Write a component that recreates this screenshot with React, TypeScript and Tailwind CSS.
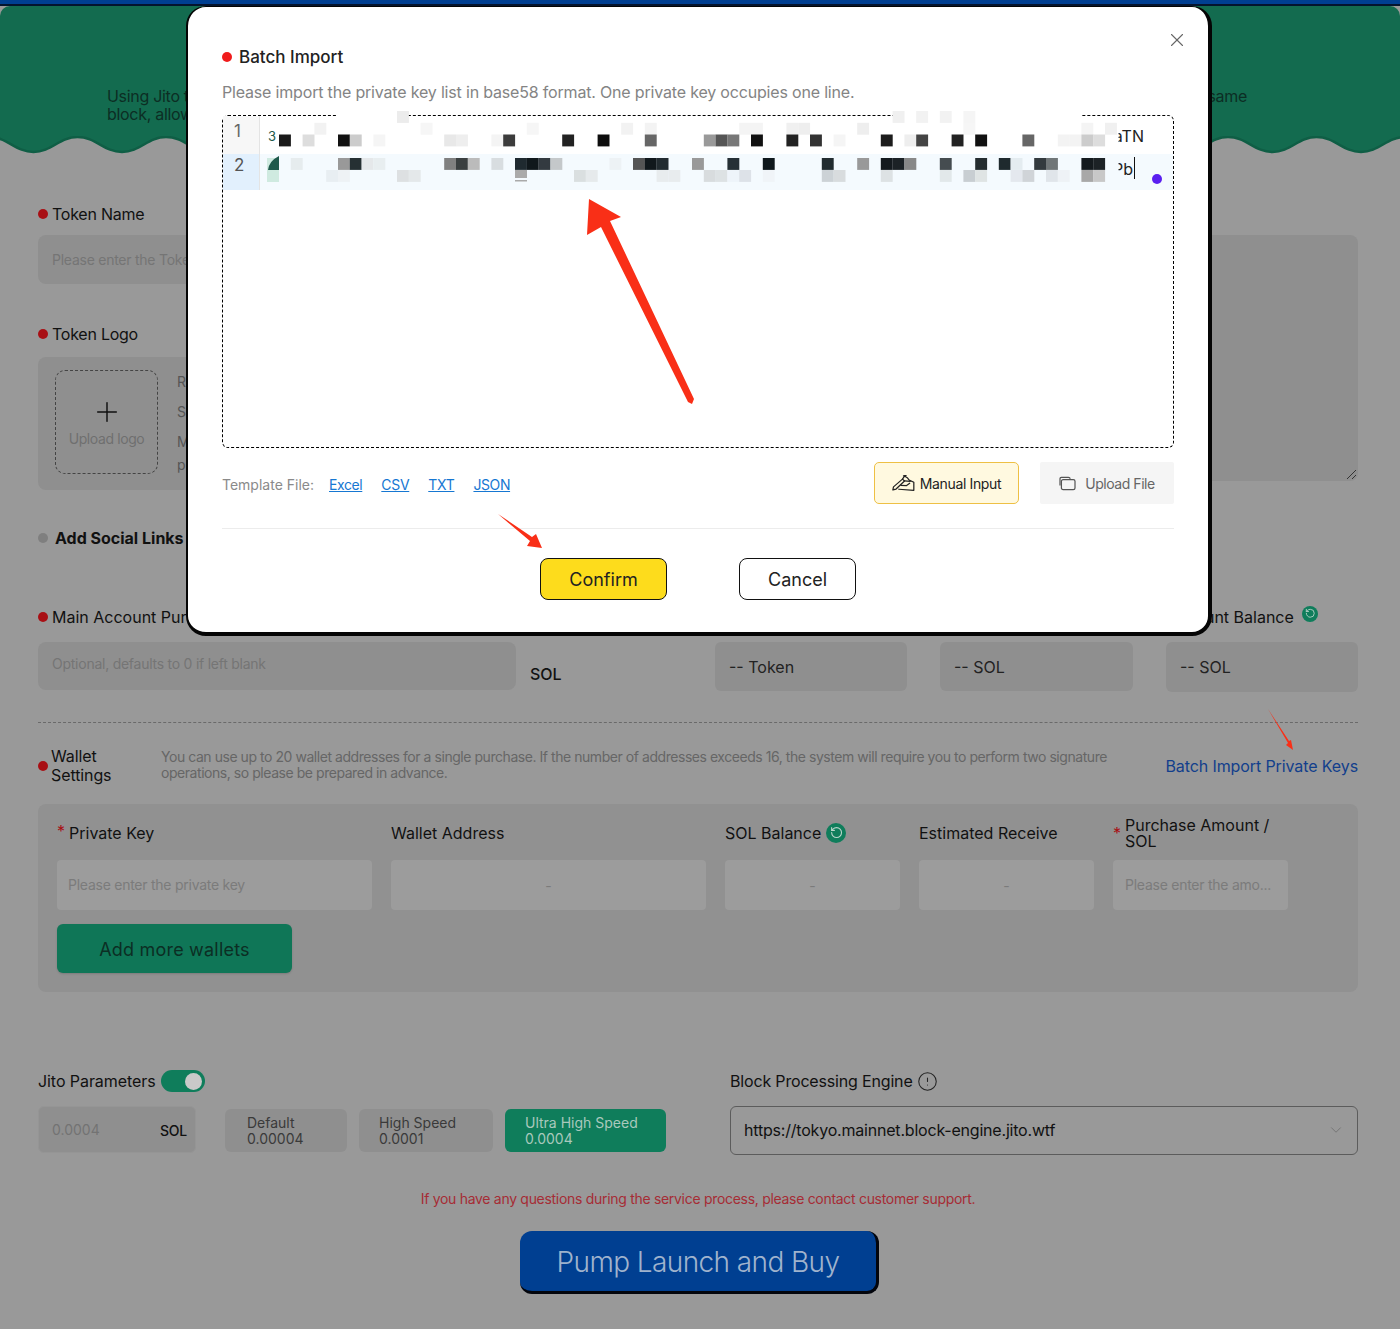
import { ChevronDown, CircleAlert, Plus, RotateCcw, X } from "lucide-react";

type Cell = [number, string];

// mosaic that hides the private keys, index = cell number from x=279
const row0: Cell[] = [[10, "#ececec"], [52, "#f0f0f0"], [54, "#f2f2f2"], [56, "#f2f2f2"], [58, "#f5f5f5"]];
const row1: Cell[] = [[3, "#f2f2f2"], [12, "#f6f6f6"], [21, "#f6f6f6"], [29, "#f2f2f2"], [31, "#f3f3f3"], [39, "#f4f4f4"], [40, "#f4f4f4"], [43, "#f0f0f0"], [44, "#eeeeee"], [49, "#eeeeee"], [58, "#f6f6f6"], [68, "#f4f4f4"], [70, "#f0f0f0"]];
const rowA: Cell[] = [[0, "#1a1a1a"], [2, "#dddddd"], [5, "#111111"], [6, "#cccccc"], [8, "#f5f5f5"], [14, "#e8e8e8"], [15, "#eeeeee"], [18, "#f4f4f4"], [19, "#3c3c3c"], [24, "#222222"], [27, "#0d0d0d"], [31, "#666666"], [36, "#999999"], [37, "#555555"], [38, "#777777"], [40, "#111111"], [43, "#222222"], [45, "#333333"], [47, "#f5f5f5"], [51, "#1c1c1c"], [53, "#eeeeee"], [54, "#444444"], [57, "#222222"], [59, "#111111"], [63, "#666666"], [66, "#f3f3f3"], [67, "#f3f3f3"], [68, "#cccccc"], [69, "#dddddd"]];
const rowB: Cell[] = [[1, "#e6ecee"], [5, "#999999"], [6, "#263033"], [7, "#e5e8ea"], [8, "#e8eef0"], [14, "#808080"], [15, "#3a3f40"], [16, "#bbbbbb"], [18, "#d8dde0"], [20, "#1f2a30"], [21, "#10181c"], [22, "#333a40"], [23, "#c4c8ca"], [28, "#edf2f5"], [30, "#555555"], [31, "#11181c"], [32, "#222b30"], [35, "#999999"], [38, "#263036"], [41, "#0f181c"], [46, "#222c30"], [49, "#999999"], [51, "#141a1e"], [52, "#1c2226"], [53, "#888888"], [56, "#454c50"], [59, "#252d30"], [61, "#1f2a2e"], [62, "#e4ecf0"], [64, "#333a3e"], [65, "#707678"], [68, "#141a1e"], [69, "#1c2226"]];
const rowC: Cell[] = [[4, "#e8eef2"], [5, "#eef2f5"], [10, "#dde0e2"], [11, "#e4e8ea"], [25, "#dadfe0"], [26, "#e6eaec"], [32, "#e8ecee"], [33, "#e8ecee"], [36, "#d8dcde"], [37, "#dde2e4"], [38, "#eef4fa"], [39, "#dde2e8"], [41, "#f0f4f8"], [46, "#ccd2d6"], [47, "#d8dcde"], [51, "#dde2e4"], [56, "#e2e8ea"], [58, "#c8ced2"], [59, "#dfe4e4"], [62, "#e4e8ee"], [63, "#d0d4d8"], [65, "#e0e5ea"], [66, "#eef2f6"], [68, "#a8a8a8"], [69, "#c8c8c8"]];

const mosaicRows: [number, Cell[]][] = [
  [5, row0],
  [16.8, row1],
  [28.5, rowA],
  [52, rowB],
  [64, rowC],
];

// wave under the green header, one bump every 88.5px
function waveEdge() {
  let d = "";
  for (let x = 1405; x > -60; x -= 88.5) {
    d += ` C${x - 18} 1 ${x - 26} 16 ${x - 44} 16 C${x - 62} 16 ${x - 70} 1 ${x - 88.5} 1`;
  }
  return d;
}

function Dot({ className = "bg-[#a80f14]" }: { className?: string }) {
  return <span className={`inline-block w-[10px] h-[10px] rounded-full shrink-0 ${className}`} />;
}

function Label({ children }: { children: React.ReactNode }) {
  return (
    <div className="flex items-center gap-[4px] h-[24px] text-[16px] tracking-[-0.25px] text-[#111]">
      <Dot />
      <span className="whitespace-nowrap">{children}</span>
    </div>
  );
}

function Refresh({ size }: { size: number }) {
  return (
    <span
      className="inline-flex items-center justify-center rounded-full bg-[#0f7d5b] text-[#b9d4ca]"
      style={{ width: size, height: size }}
    >
      <RotateCcw size={size * 0.66} strokeWidth={2} />
    </span>
  );
}

function HandIcon() {
  return (
    <svg width="23" height="16" viewBox="0 0 22 15.5" fill="none" stroke="#222" strokeWidth="1.2" strokeLinejoin="round" strokeLinecap="round">
      <path d="M0.7 14.5 L1.3 11.5 L10 4 L12 5.8 L3.8 13.6 Z" />
      <path d="M10 4 L12 1 L15 3 L16.5 5 L21 7 V14.8 L6.5 13.8" />
      <path d="M12 5.8 L17.5 6.2 M8.5 10 L14 10.2 L17 8" />
      <path d="M11 0.8 L13.5 0.4" />
    </svg>
  );
}

function FolderIcon() {
  return (
    <svg width="17" height="15" viewBox="0 0 18 16" fill="none" stroke="#555" strokeWidth="1.3" strokeLinejoin="round">
      <path d="M1 10 V3 Q1 1.5 2.5 1.5 H10 Q11.5 1.5 12 3" />
      <rect x="2.5" y="3.8" width="14.5" height="10.7" rx="1.8" />
    </svg>
  );
}

function Background() {
  return (
    <div>
      <div className="h-[4px] bg-[#003f91]" />
      <div className="h-[2px] bg-[#04142e]" />
      <div className="h-[130px] bg-[#136b4f] rounded-t-[10px] pt-[81px] pl-[107px] pr-[153px] text-[16px] leading-[18px] tracking-[-0.3px] text-[#0c2e24]">
        <div className="flex justify-between">
          <span>Using Jito technology</span>
          <span>same</span>
        </div>
        <div>block, allowing</div>
      </div>
      <svg className="block" width="1400" height="18" viewBox="0 0 1400 18">
        <path d={`M0 0 H1405 V1${waveEdge()} V0 Z`} fill="#136b4f" />
        <path d={`M1405 1${waveEdge()}`} fill="none" stroke="#0f5e45" strokeWidth="2.5" />
      </svg>

      <div className="pl-[38px] pr-[42px] pt-[48px]">
        <div className="grid grid-cols-[642px_642px] gap-x-[36px]">
          <div>
            <Label>Token Name</Label>
            <div className="mt-[9px] h-[49px] rounded-[8px] bg-[#8f8f8f] px-[14px] flex items-center text-[14px] tracking-[-0.25px] text-[#757575]">
              Please enter the Token Name
            </div>
            <div className="mt-[38px]">
              <Label>Token Logo</Label>
            </div>
            <div className="mt-[11px] h-[133px] rounded-[8px] bg-[#8f8f8f] pl-[17px] pt-[13px] flex gap-[19px]">
              <div className="w-[103px] h-[104px] rounded-[10px] border border-dashed border-[#444] flex flex-col items-center justify-center">
                <Plus size={32} strokeWidth={1.1} className="text-[#111]" />
                <span className="text-[14px] tracking-[-0.4px] text-[#6f6f6f]">Upload logo</span>
              </div>
              <div className="text-[14px] text-[#555] leading-[23px]">
                <p>Recommended</p>
                <p className="mt-[7px]">Size</p>
                <p className="mt-[7px]">Max</p>
                <p>png</p>
              </div>
            </div>
          </div>
          <div>
            <div className="h-[24px]" />
            <div className="relative mt-[9px] h-[246px] rounded-[8px] bg-[#8f8f8f]">
              <svg className="absolute right-[1px] bottom-[1px]" width="11" height="11" viewBox="0 0 11 11" stroke="#333" strokeWidth="1">
                <path d="M1 10 L10 1 M6 10 L10 6" />
              </svg>
            </div>
          </div>
        </div>

        <div className="mt-[36px] flex items-center gap-[7px] h-[24px]">
          <Dot className="bg-[#7f7f7f]" />
          <span className="text-[16px] font-bold text-[#111]">Add Social Links</span>
        </div>

        <div className="mt-[55px] flex">
          <div className="w-[478px]">
            <Label>
              <span className="tracking-normal">Main Account Purchase Amount</span>
            </Label>
            <div className="mt-[13px] h-[48px] rounded-[8px] bg-[#8f8f8f] px-[14px] pb-[6px] flex items-center text-[14px] tracking-[-0.25px] text-[#757575]">
              Optional, defaults to 0 if left blank
            </div>
          </div>
          <div className="ml-[14px] w-[185px] pt-[60px] text-[16px] font-medium leading-[18px] text-[#111]">SOL</div>
          <div className="w-[192px] mt-[37px]">
            <div className="h-[49px] rounded-[6px] bg-[#8f8f8f] px-[14px] flex items-center text-[16px] text-[#222]">-- Token</div>
          </div>
          <div className="ml-[33px] w-[193px] mt-[37px]">
            <div className="h-[49px] rounded-[6px] bg-[#8f8f8f] px-[14px] flex items-center text-[16px] text-[#222]">-- SOL</div>
          </div>
          <div className="ml-[33px] w-[192px]">
            <div className="flex items-start gap-[8px] h-[24px] text-[16px] text-[#111] whitespace-nowrap">
              Account Balance
              <span className="-mt-[4px]">
                <Refresh size={16} />
              </span>
            </div>
            <div className="mt-[13px] h-[50px] rounded-[6px] bg-[#8f8f8f] px-[14px] flex items-center text-[16px] text-[#222]">-- SOL</div>
          </div>
        </div>

        <div className="mt-[30px] border-t border-dashed border-[#6a6a6a]" />

        <div className="mt-[23px] h-[39px] flex items-center">
          <Dot className="bg-[#a80f14] w-[8px]" />
          <div className="ml-[5px] w-[110px] text-[16px] leading-[19px] tracking-[-0.1px] text-[#111] -translate-x-[2px]">
            Wallet
            <br />
            Settings
          </div>
          <p className="-ml-[2px] w-[960px] text-[14px] leading-[16px] tracking-[-0.45px] text-[#666] -mt-[1px]">
            You can use up to 20 wallet addresses for a single purchase. If the number of addresses exceeds 16, the system will require you to perform two signature operations, so please be prepared in advance.
          </p>
          <span className="ml-auto text-[16px] tracking-[-0.1px] text-[#123f8c] whitespace-nowrap">Batch Import Private Keys</span>
        </div>

        <div className="mt-[19px] h-[188px] rounded-[8px] bg-[#919191] px-[19px] pt-[10px]">
          <div className="flex gap-[19px]">
            <div className="w-[315px]">
              <div className="h-[38px] flex items-center text-[16px] text-[#111]">
                <span className="text-[#a80f14] mr-[4px] -mt-[4px]">*</span>Private Key
              </div>
              <div className="mt-[8px] h-[50px] rounded-[4px] bg-[#9c9c9c] px-[11px] pb-[2px] flex items-center text-[14px] tracking-[-0.25px] text-[#7b7b7b]">
                Please enter the private key
              </div>
            </div>
            <div className="w-[315px]">
              <div className="h-[38px] flex items-center text-[16px] text-[#111]">Wallet Address</div>
              <div className="mt-[8px] h-[50px] rounded-[4px] bg-[#9c9c9c] flex items-center justify-center text-[14px] text-[#7b7b7b]">-</div>
            </div>
            <div className="w-[175px]">
              <div className="h-[38px] flex items-center gap-[5px] text-[16px] text-[#111]">
                SOL Balance
                <Refresh size={20} />
              </div>
              <div className="mt-[8px] h-[50px] rounded-[4px] bg-[#9c9c9c] flex items-center justify-center text-[14px] text-[#7b7b7b]">-</div>
            </div>
            <div className="w-[175px]">
              <div className="h-[38px] flex items-center text-[16px] text-[#111]">Estimated Receive</div>
              <div className="mt-[8px] h-[50px] rounded-[4px] bg-[#9c9c9c] flex items-center justify-center text-[14px] text-[#7b7b7b]">-</div>
            </div>
            <div className="w-[175px]">
              <div className="h-[38px] flex items-center text-[16px] leading-[16px] text-[#111] whitespace-nowrap">
                <span className="text-[#a80f14] mr-[4px]">*</span>
                <span>
                  Purchase Amount /
                  <br />
                  SOL
                </span>
              </div>
              <div className="mt-[8px] h-[50px] rounded-[4px] bg-[#9c9c9c] px-[12px] pb-[2px] flex items-center text-[14px] tracking-[-0.25px] whitespace-nowrap text-[#7b7b7b]">
                Please enter the amo...
              </div>
            </div>
          </div>
          <button className="mt-[14px] block w-[235px] h-[49px] rounded-[6px] bg-[#0f7657] pt-[2px] text-[18px] tracking-[0.2px] text-[#0c2e24] shadow-[0_1px_2px_rgba(0,0,0,0.15)]">
            Add more wallets
          </button>
        </div>

        <div className="mt-[77px] flex">
          <div className="w-[692px]">
            <div className="flex items-center gap-[5px] h-[24px] text-[16px] tracking-[-0.07px] text-[#111]">
              Jito Parameters
              <span className="w-[44px] h-[22px] rounded-full bg-[#0f7d5b] flex items-center justify-end pr-[3px]">
                <span className="w-[17px] h-[17px] rounded-full bg-[#c9c9c9]" />
              </span>
            </div>
            <div className="mt-[13px] flex items-center">
              <div className="w-[158px] h-[47px] rounded-[6px] bg-[#8f8f8f] border border-[#959595] pl-[13px] pr-[8px] flex items-center justify-between">
                <span className="text-[14px] text-[#737373]">0.0004</span>
                <span className="text-[14px] font-medium tracking-[-0.2px] text-[#111] pt-[2px]">SOL</span>
              </div>
              <div className="ml-[29px] mt-[2px] w-[122px] h-[43px] rounded-[6px] bg-[#8f8f8f] pl-[22px] flex flex-col justify-center text-[14px] leading-[16px] text-[#3a3a3a]">
                <span>Default</span>
                <span>0.00004</span>
              </div>
              <div className="ml-[12px] mt-[2px] w-[134px] h-[43px] rounded-[6px] bg-[#8f8f8f] pl-[20px] flex flex-col justify-center text-[14px] leading-[16px] text-[#3a3a3a]">
                <span>High Speed</span>
                <span>0.0001</span>
              </div>
              <div className="ml-[12px] mt-[2px] w-[161px] h-[43px] rounded-[6px] bg-[#0f7d5b] pl-[20px] flex flex-col justify-center text-[14px] leading-[16px] text-[#a9c9bd]">
                <span>Ultra High Speed</span>
                <span>0.0004</span>
              </div>
            </div>
          </div>
          <div className="w-[628px]">
            <div className="flex items-center gap-[4px] h-[24px] text-[16px] tracking-[-0.17px] text-[#111]">
              Block Processing Engine
              <CircleAlert size={21} strokeWidth={1.2} className="text-[#222]" />
            </div>
            <div className="mt-[13px] h-[49px] rounded-[6px] border border-[#5c5c5c] pl-[13px] pr-[12px] pb-[2px] flex items-center justify-between text-[16px] tracking-[-0.2px] text-[#111]">
              https://tokyo.mainnet.block-engine.jito.wtf
              <ChevronDown size={18} strokeWidth={1} className="text-[#6a6a6a]" />
            </div>
          </div>
        </div>

        <p className="mt-[34px] h-[20px] text-center text-[14px] leading-[20px] tracking-[-0.3px] text-[#a62c35]">
          If you have any questions during the service process, please contact customer support.
        </p>
        <button className="mt-[22px] ml-[482px] block w-[359px] h-[63px] rounded-[12px] bg-[#003f91] border-r-[3px] border-b-[3px] border-[#03050c] pt-[2px] text-[28px] font-light tracking-[-0.6px] text-[#9fb3cd]">
          Pump Launch and Buy
        </button>
      </div>
    </div>
  );
}

function Editor() {
  return (
    <div className="relative mt-[11px] h-[333px] rounded-[6px] border border-dashed border-black text-[16px]">
      <div className="flex h-[38px]">
        <div className="w-[37px] bg-[#f7f7f7] border-r border-[#e4e4e4] pt-[3px] pl-[11px] text-[17px] text-[#666]">1</div>
        <div className="flex-1 pl-[8px] pr-[29px] pt-[8px] flex justify-between text-[#222] leading-[24px]">
          <span className="text-[#1d5a4a] text-[13px]">3</span>
          <span>aTN</span>
        </div>
      </div>
      <div className="flex h-[36px]">
        <div className="w-[37px] bg-[#e2f0fd] border-r border-[#e4e4e4] pl-[11px] text-[17px] leading-[22px] text-[#555]">2</div>
        <div className="flex-1 bg-[#f4fafe] pr-[38px] pt-[1px] flex justify-end text-[#222] leading-[24px]">
          <span className="border-r border-[#111] pr-[1px] h-[22px] mt-[2px]">Pb</span>
        </div>
      </div>

      {/* blurred keys, drawn over the text like the mosaic in the screenshot */}
      <svg className="absolute left-[-1px] top-[-10px]" width="952" height="90" viewBox="0 0 952 90">
        <rect x="115" y="5" width="60" height="8" fill="#fff" />
        <rect x="672" y="5" width="188" height="8" fill="#fff" />
        <rect x="45" y="52" width="12" height="24" fill="#cfeae0" />
        <path d="M46 64 Q47 55 57 50 V64 Z" fill="#1f5a4c" />
        <rect x="882" y="20" width="14.5" height="24" fill="#fff" />
        <rect x="882" y="50" width="14.5" height="26" fill="#f4fafe" />
        {mosaicRows.map(([y, cells]) =>
          cells.map(([k, color]) => (
            <rect key={`${y}-${k}`} x={57 + k * 11.8} y={y} width="11.9" height="11.9" fill={color} />
          ))
        )}
        <rect x="293" y="64" width="12" height="8" fill="#aaaaaa" />
        <rect x="293" y="74" width="12" height="1.5" fill="#aaaaaa" />
      </svg>
      <span className="absolute left-[929px] top-[58px] w-[10px] h-[10px] rounded-full bg-[#5a1ff0]" />
    </div>
  );
}

function Modal() {
  return (
    <div className="absolute left-[186px] top-[6px] w-[1026px] h-[630px] bg-white rounded-[20px] border-l-2 border-t border-r-4 border-b-4 border-[#050505] pl-[34px] pr-[34px] pt-[38px]">
      <X size={22} strokeWidth={1.2} className="absolute right-[20px] top-[22px] text-[#666]" />
      <div className="flex items-center gap-[7px] h-[24px]">
        <Dot className="bg-[#f01c1c]" />
        <span className="pt-[2px] text-[17px] font-medium text-[#222]">Batch Import</span>
      </div>
      <p className="mt-[11px] text-[16px] leading-[24px] tracking-[-0.18px] text-[#848484]">
        Please import the private key list in base58 format. One private key occupies one line.
      </p>
      <Editor />
      <div className="mt-[14px] h-[42px] flex items-center">
        <div className="flex items-center pt-[2px]">
          <span className="text-[14px] text-[#8a8a8a] w-[107px]">Template File:</span>
          <a className="text-[14px] tracking-[-0.4px] text-[#1677d2] underline">Excel</a>
          <a className="ml-[19px] text-[14px] tracking-[-0.3px] text-[#1677d2] underline">CSV</a>
          <a className="ml-[19px] text-[14px] tracking-[-0.3px] text-[#1677d2] underline">TXT</a>
          <a className="ml-[19px] text-[14px] tracking-[-0.4px] text-[#1677d2] underline">JSON</a>
        </div>
        <button className="ml-auto w-[145px] h-[42px] rounded-[5px] bg-[#fff9e0] border border-[#eec044] flex items-center justify-center gap-[5px] text-[14px] tracking-[-0.35px] text-[#222]">
          <HandIcon />
          Manual Input
        </button>
        <button className="ml-[21px] w-[134px] h-[42px] rounded-[2px] bg-[#f5f5f5] flex items-center justify-center gap-[9px] text-[14px] tracking-[-0.45px] text-[#666]">
          <FolderIcon />
          Upload File
        </button>
      </div>
      <div className="mt-[24px] border-t border-[#ececec]" />
      <div className="mt-[29px] flex justify-center gap-[72px]">
        <button className="w-[127px] h-[42px] rounded-[8px] bg-[#fddc1c] border border-[#111] text-[18px] text-[#222]">Confirm</button>
        <button className="w-[117px] h-[42px] rounded-[8px] bg-white border border-[#111] text-[18px] text-[#222]">Cancel</button>
      </div>
    </div>
  );
}

export default function App() {
  return (
    <div className="relative w-[1400px] h-[1329px] overflow-hidden bg-[#999999] font-['Inter',sans-serif]">
      <Background />
      <Modal />
      {/* red hand drawn annotation arrows */}
      <svg className="absolute left-0 top-0 pointer-events-none" width="1400" height="1329" viewBox="0 0 1400 1329">
        <path d="M589 199 L621 217 L610 221 L694 399 L692 404 L688 402 L601 227 L587 235 Z" fill="#f92f17" />
        <path d="M498 514 L532 537 L536 534 L542 548 L527 546 L530 541 Z" fill="#f92f17" />
        <path d="M1268 709 L1289 741 L1291 740 L1293 750 L1286 745 L1288 743 Z" fill="#f92f17" />
      </svg>
    </div>
  );
}
